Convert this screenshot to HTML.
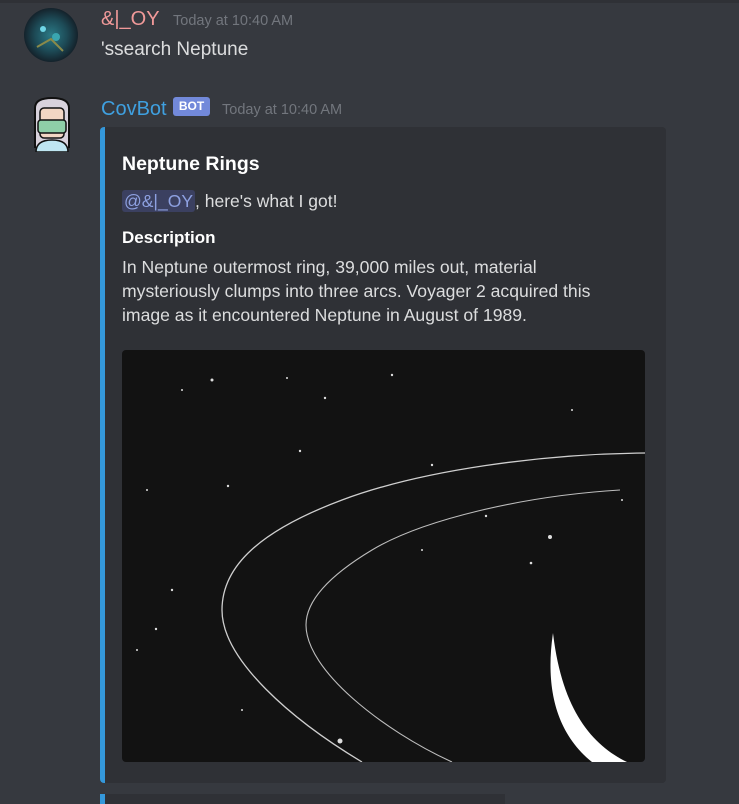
<!DOCTYPE html>
<html><head><meta charset="utf-8"><style>
body{margin:0;width:739px;height:797px;background:#36393f;font-family:"Liberation Sans",sans-serif;position:relative;overflow:hidden}
.a{position:absolute}
.ts{font-size:14.5px;color:#72767d}
.t{color:#dcddde;font-size:17px}
</style></head><body>
<div class="a" style="top:0;left:0;width:739px;height:3px;background:#2f3136"></div>
<svg class="a" style="left:23px;top:7px" width="56" height="56"><defs><radialGradient id="g"><stop offset="0" stop-color="#2b7a86"/><stop offset=".6" stop-color="#1d4a56"/><stop offset="1" stop-color="#14222b"/></radialGradient></defs><circle cx="28" cy="28" r="27" fill="url(#g)"/><circle cx="20" cy="22" r="3" fill="#6fd6e6"/><circle cx="33" cy="30" r="4" fill="#3aa6b0"/><path d="M14 40 L28 32 L40 44" stroke="#8a8a4a" stroke-width="2" fill="none"/></svg>
<div class="a" style="left:101px;top:8px;color:#f09999;font-size:20px">&amp;|_OY</div>
<div class="a ts" style="left:173px;top:13px">Today at 10:40 AM</div>
<div class="a t" style="left:101px;top:39px;font-size:19px">'ssearch Neptune</div>

<svg class="a" style="left:32px;top:96px" width="40" height="56"><path d="M3 52 V12 Q3 2 20 2 Q37 2 37 12 V52" fill="#d8d2dc" stroke="#111" stroke-width="2"/><rect x="8" y="12" width="24" height="30" rx="4" fill="#f2d6c4" stroke="#111" stroke-width="1.5"/><rect x="6" y="24" width="28" height="13" rx="3" fill="#8fcfa8" stroke="#111" stroke-width="1.5"/><path d="M4 56 Q4 44 20 44 Q36 44 36 56Z" fill="#bfe6f2" stroke="#111" stroke-width="1.5"/></svg>
<div class="a" style="left:101px;top:98px;color:#3fa0e0;font-size:20px">CovBot</div>
<div class="a" style="left:173px;top:97px;width:37px;height:19px;background:#7289da;border-radius:3px;color:#fff;font-size:12px;font-weight:bold;text-align:center;line-height:19px">BOT</div>
<div class="a ts" style="left:222px;top:102px">Today at 10:40 AM</div>

<div class="a" style="left:100px;top:127px;width:566px;height:656px;background:#2f3136;border-radius:4px;border-left:5px solid #3498db;box-sizing:border-box"></div>
<div class="a" style="left:122px;top:153px;color:#fff;font-weight:bold;font-size:19.5px">Neptune Rings</div>
<div class="a t" style="left:122px;top:191px;white-space:nowrap;font-size:17.5px"><span style="background:#3b4060;color:#8ea1e1;border-radius:3px;padding:1px 2px">@&amp;|_OY</span>, here's what I got!</div>
<div class="a" style="left:122px;top:228px;color:#fff;font-weight:bold;font-size:17px">Description</div>
<div class="a t" style="left:122px;top:255px;line-height:24px;white-space:nowrap;font-size:17.6px">In Neptune outermost ring, 39,000 miles out, material<br>mysteriously clumps into three arcs. Voyager 2 acquired this<br>image as it encountered Neptune in August of 1989.</div>

<svg class="a" style="left:122px;top:350px;border-radius:4px" width="523" height="412"><rect width="523" height="412" fill="#121212"/>
<g fill="#ddd"><circle cx="90" cy="30" r="1.5"/><circle cx="165" cy="28" r="1"/><circle cx="270" cy="25" r="1.2"/><circle cx="106" cy="136" r="1.2"/><circle cx="178" cy="101" r="1.2"/><circle cx="310" cy="115" r="1.2"/><circle cx="428" cy="187" r="2"/><circle cx="364" cy="166" r="1.2"/><circle cx="409" cy="213" r="1.3"/><circle cx="203" cy="48" r="1.2"/><circle cx="218" cy="391" r="2.5"/><circle cx="50" cy="240" r="1.2"/><circle cx="34" cy="279" r="1.2"/><circle cx="25" cy="140" r="1"/><circle cx="450" cy="60" r="1"/><circle cx="500" cy="150" r="1"/><circle cx="60" cy="40" r="1"/><circle cx="15" cy="300" r="1"/><circle cx="120" cy="360" r="1"/><circle cx="300" cy="200" r="1"/></g>
<path d="M523 103 C420 104 300 120 220 150 C140 180 100 215 100 260 C100 310 170 370 240 412" stroke="#cfcfcf" stroke-width="1.3" fill="none"/>
<path d="M498 140 C400 146 300 170 250 200 C200 230 184 255 184 275 C184 320 260 380 330 412" stroke="#bdbdbd" stroke-width="1.1" fill="none"/>
<path d="M431 283 C424 330 430 380 470 412 L505 412 C470 395 440 360 431 283Z" fill="#fff"/>
</svg>
<div class="a" style="left:100px;top:794px;width:400px;height:10px;background:#2f3136;border-left:5px solid #3498db"></div>
</body></html>
